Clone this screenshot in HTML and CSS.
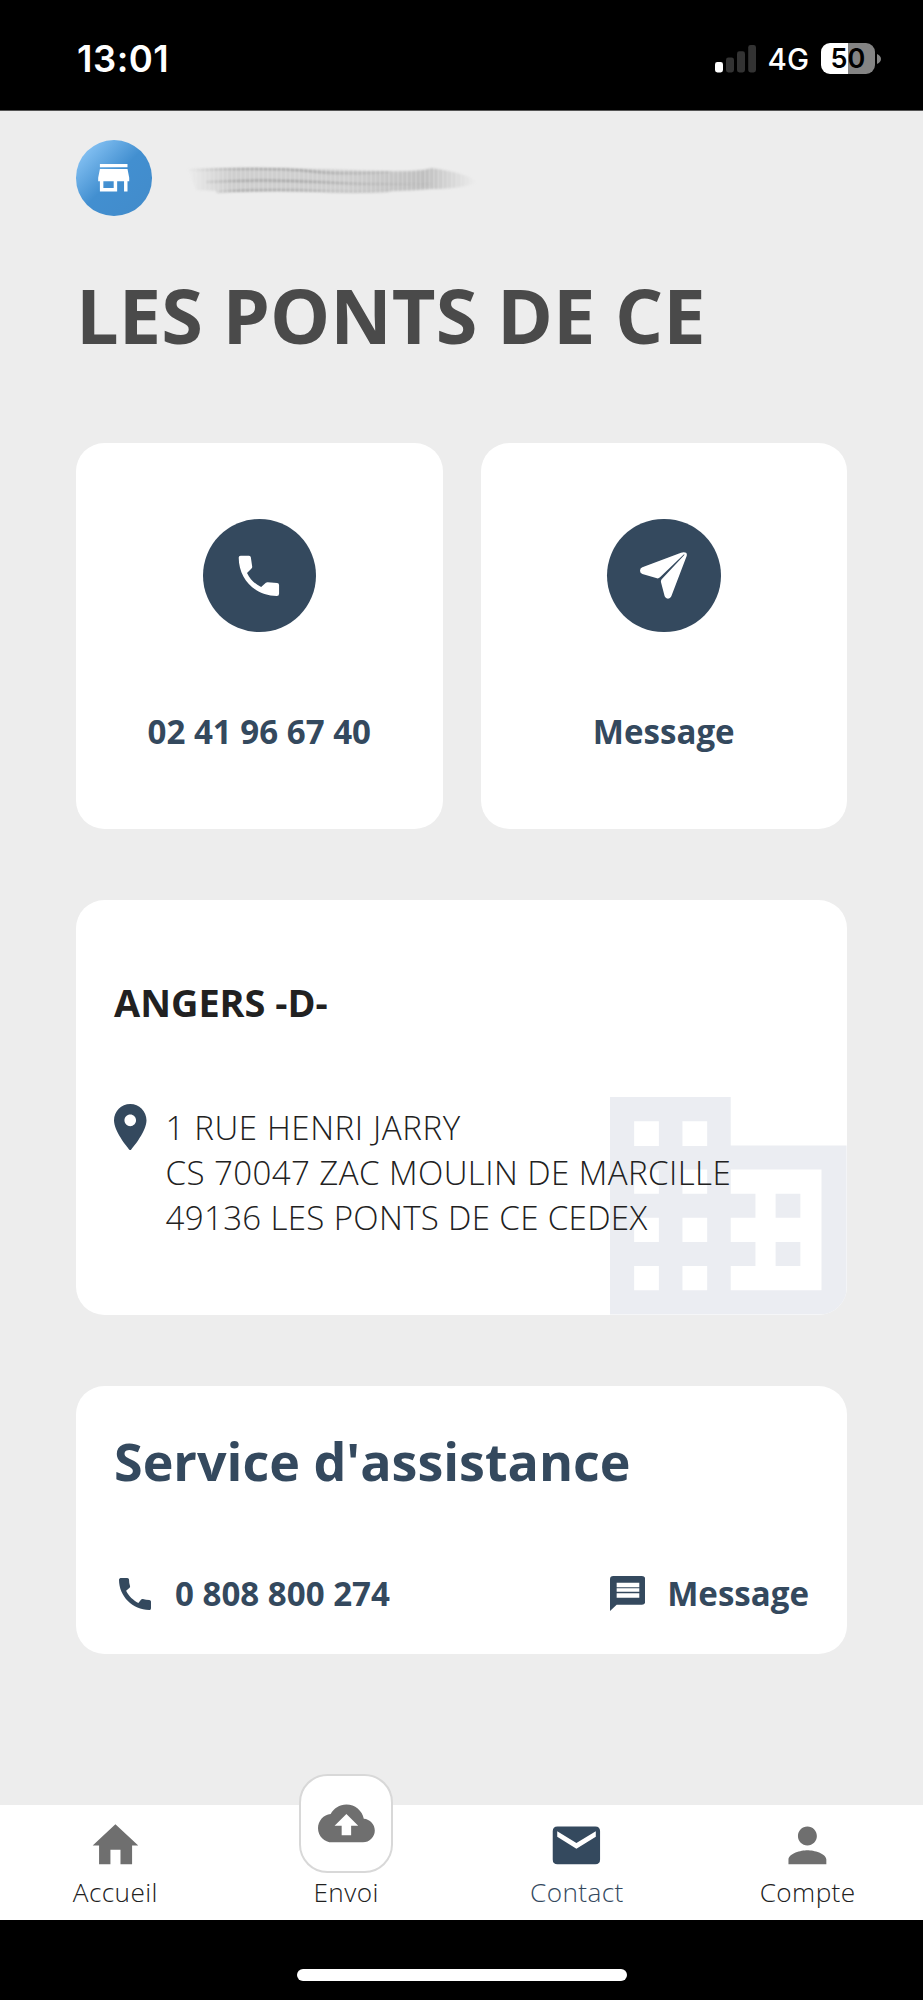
FILE: index.html
```html
<!DOCTYPE html>
<html lang="fr">
<head>
<meta charset="utf-8">
<title>Contact</title>
<link rel="stylesheet" href="styles.css">
</head>
<body>
<header class="status">
  <span class="clock">13:01</span>
  <div class="status-right">
    <svg class="signal" viewBox="0 0 41 28" width="41" height="28"><rect x="0" y="17" width="8" height="10.5" rx="2.4" fill="#fff"/><g fill="#333"><rect x="11" y="12.5" width="8" height="15" rx="2.4"/><rect x="22" y="6.3" width="8" height="21.2" rx="2.4"/><rect x="33.2" y="0" width="7.8" height="27.5" rx="2.4"/></g></svg>
    <span class="network">4G</span>
    <div class="battery"><span class="level">50</span></div>
    <svg class="nub" viewBox="0 0 4 10" width="4" height="10"><path d="M0 0Q4 1.8 4 5T0 10z" fill="#848484"/></svg>
  </div>
</header>
<main class="content">
  <div class="agency">
    <div class="avatar"><svg viewBox="0 0 24 24" width="41.4" height="41.4"><path fill="#fff" d="M20 4H4v2h16V4zm1 10v-2l-1-5H4l-1 5v2h1v6h10v-6h4v6h2v-6h1zm-9 4H6v-4h6v4z"/></svg></div>
    <svg class="smudge" viewBox="0 0 288 32" width="294" height="32" preserveAspectRatio="none">
      <defs>
        <linearGradient id="fade" x1="0" x2="1"><stop offset="0" stop-color="#bbb" stop-opacity="0"/><stop offset=".16" stop-color="#c4c4c4" stop-opacity=".75"/><stop offset=".55" stop-color="#c4c4c4" stop-opacity=".75"/><stop offset=".82" stop-color="#b8b8b8" stop-opacity=".85"/><stop offset="1" stop-color="#bbb" stop-opacity="0"/></linearGradient>
        <linearGradient id="line" gradientUnits="userSpaceOnUse" x1="0" x2="280" y1="0" y2="0"><stop offset="0" stop-color="#888" stop-opacity="0"/><stop offset=".2" stop-color="#888" stop-opacity=".6"/><stop offset=".4" stop-color="#888" stop-opacity=".65"/><stop offset=".8" stop-color="#999" stop-opacity=".15"/><stop offset="1" stop-color="#999" stop-opacity="0"/></linearGradient>
        <pattern id="ribs" width="4.4" height="32" patternUnits="userSpaceOnUse"><rect width="1.8" height="32" fill="#ededed" opacity=".2"/></pattern>
        <filter id="soft" x="-5%" y="-20%" width="110%" height="140%"><feGaussianBlur stdDeviation="1"/></filter>
      </defs>
      <g filter="url(#soft)">
        <path fill="url(#fade)" d="M2 4Q90 2 160 5T240 3Q275 8 285 17Q272 24 240 24Q190 28 150 26T50 27L10 25z"/>
        <path fill="none" stroke="url(#line)" stroke-width="2" d="M2 5Q90 2 120 6T200 7M20 17Q80 14 130 17T240 19M30 27Q80 24 130 26T200 26"/>
      </g>
      <path fill="url(#ribs)" d="M6 2h274v26H6z"/>
    </svg>
  </div>
  <h1 class="title">LES PONTS DE CE</h1>
  <div class="actions">
    <div class="card action">
      <div class="disc"><svg viewBox="0 0 24 24" width="53.8" height="53.8"><path fill="#fff" d="M3.9 3h3.7q.7 0 .8.7l.6 4.1q.1.5-.3.9l-2 2c1.4 2.9 3.5 4.9 6.3 6.3l2.1-1.9q.4-.4.9-.3l4.1.4q.9.1.9.9v3.9q0 1-1 1C10.5 21 3 13.5 3 3.9 3 3.3 3.3 3 3.9 3z"/></svg></div>
      <span>02 41 96 67 40</span>
    </div>
    <div class="card action">
      <div class="disc"><svg viewBox="540 367 141 140" width="47" height="46.7"><path fill="#fff" fill-rule="evenodd" d="M671 368q-4 0-8 1.500L547 413q-7 3-7 10t7 10l44 13q5 1 9-3L672 374q2 0 1 2L605 449q-3 4-2 9l11 42q3 7 10 7t10-7L680 379q3-11-9-11z"/></svg></div>
      <span>Message</span>
    </div>
  </div>
  <section class="card address">
    <svg class="building" viewBox="0 0 19.6 18" width="236.6" height="217.5"><path fill="#ebedf2" fill-rule="evenodd" d="M0 0h10v4h9.6v14H0zM2 2v2.05h2.05V2zM6 2v2.05h2.05V2zM2 6v2h2.05V6zM6 6v2h2.05V6zM2 10v2h2.05v-2zM6 10v2h2.05v-2zM2 14v2h2.05v-2zM6 14v2h2.05v-2zM10 6v2h2.05v2H10v2h2.05v2H10v2h7.52V6zM13.72 8h2.05v2h-2.05zM13.72 12h2.05v2h-2.05z"/></svg>
    <h2 class="place">ANGERS -D-</h2>
    <div class="where">
      <svg class="pin" viewBox="5 2 14 20" width="32.5" height="46.7" preserveAspectRatio="none"><path fill="#34495e" d="M12 2C8.13 2 5 5.13 5 9c0 5.25 7 13 7 13s7-7.75 7-13c0-3.87-3.13-7-7-7zm0 9.5c-1.38 0-2.5-1.12-2.5-2.5s1.12-2.5 2.5-2.5 2.5 1.12 2.5 2.5-1.12 2.5-2.5 2.5z"/></svg>
      <p class="lines"><span class="street">1 RUE HENRI JARRY</span><br>CS 70047 ZAC MOULIN DE MARCILLE<br><span class="city">49136 LES PONTS DE CE CEDEX</span></p>
    </div>
  </section>
  <section class="card support">
    <h2 class="support-title">Service d'assistance</h2>
    <div class="support-row">
      <div class="link call"><svg viewBox="3 3 18 18" width="32" height="32"><path fill="#34495e" d="M20.01 15.38c-1.23 0-2.42-.2-3.53-.56-.35-.12-.74-.03-1.01.24l-1.57 1.97c-2.83-1.35-5.48-3.9-6.89-6.83l1.95-1.66c.27-.28.35-.67.24-1.02-.37-1.11-.56-2.3-.56-3.53 0-.54-.45-.99-.99-.99H4.19C3.65 3 3 3.24 3 3.99 3 13.28 10.73 21 20.01 21c.71 0 .99-.63.99-1.18v-3.45c0-.54-.45-.99-.99-.99z"/></svg><span>0 808 800 274</span></div>
      <div class="link write"><svg viewBox="448 618 106 105" width="35.3" height="35"><path fill="#34495e" fill-rule="evenodd" d="M458 618h86q10 0 10 10v66q0 10-10 10h-76l-20 19V628q0-10 10-10zM468 638v13.500h68V638zM468 655v10.500h68V655zM468 670v13.500h68V670z"/></svg><span>Message</span></div>
    </div>
  </section>
</main>
<nav class="tabs">
  <a class="tab"><svg viewBox="0 0 24 24" width="56.8" height="56.8"><path fill="#6f6f6f" d="M9.9 20v-6.2h4.25V20h4.9v-8h2.6L12 3.1 2.4 12h2.7v8z"/></svg><span>Accueil</span></a>
  <a class="tab"><div class="upload"><svg viewBox="0 0 24 24" width="56.8" height="56.8"><path fill="#6f6f6f" d="M19.35 10.04C18.67 6.59 15.64 4 12 4 9.11 4 6.6 5.64 5.35 8.04 2.34 8.36 0 10.91 0 14c0 3.31 2.69 6 6 6h13c2.76 0 5-2.24 5-5 0-2.64-2.05-4.78-4.65-4.96zM14 13v4h-4v-4H7l5-5 5 5h-3z"/></svg></div><span>Envoi</span></a>
  <a class="tab active"><svg viewBox="0 0 24 24" width="56.8" height="56.8"><path fill="#34495e" fill-rule="evenodd" d="M4 4h16q2 0 2 2v12q0 2-2 2H4q-2 0-2-2V6q0-2 2-2zM3.9 6v2.3L12 13.4l8.2-5.1V6L12 11z"/></svg><span>Contact</span></a>
  <a class="tab"><svg viewBox="0 0 24 24" width="56.8" height="56.8"><path fill="#6f6f6f" d="M12 12c2.21 0 4-1.79 4-4s-1.79-4-4-4-4 1.79-4 4 1.79 4 4 4zm0 2c-2.67 0-8 1.34-8 4v2h16v-2c0-2.66-5.33-4-8-4z"/></svg><span>Compte</span></a>
</nav>
<footer class="home-area"><div class="home-bar"></div></footer>
</body>
</html>
```
FILE: styles.css
```css
* { box-sizing: border-box; margin: 0; padding: 0; }
body { width: 923px; height: 2000px; display: flex; flex-direction: column; overflow: hidden; background: #ededed; font-family: "Open Sans", "Noto Sans", sans-serif; color: #212121; }
svg { display: block; flex: none; }
span { white-space: nowrap; }

.status { height: 111px; flex: none; background: #000; color: #fff; display: flex; justify-content: space-between; align-items: center; padding: 7px 42px 0 77px; font-family: Inter, sans-serif; border-bottom: 1px solid #555; }
.clock { font-size: 36.5px; font-weight: 600; letter-spacing: 0.5px; }
.status-right { display: flex; align-items: center; }
.network { font-size: 29.5px; font-weight: 500; margin: 0 12px; }
.battery { width: 54px; height: 31px; border-radius: 9px; background: linear-gradient(90deg, #fff 50%, #848484 50%); color: #000; display: flex; align-items: center; justify-content: center; }
.level { font-size: 27px; font-weight: 600; line-height: 31px; }
.nub { margin-left: 2px; }

.content { height: 1694px; flex: none; padding: 29px 76px 0; }
.agency { display: flex; align-items: center; height: 75.7px; }
.avatar { width: 75.7px; height: 75.7px; border-radius: 50%; background: linear-gradient(135deg, #90caf9 5%, #428fd0 50%, #428bca 100%); display: flex; align-items: center; justify-content: center; }
.smudge { margin: 6px 0 0 34px; }
.title { margin-top: 54.3px; font-size: 75.7px; line-height: 90px; font-weight: 700; color: #4a4a4a; }

.card { background: #fff; border-radius: 28.4px; }
.actions { margin-top: 83px; display: grid; grid-template-columns: 1fr 1fr; gap: 38px; }
.action { height: 386px; padding-top: 76px; display: flex; flex-direction: column; align-items: center; gap: 77px; font-size: 33.1px; line-height: 45px; font-weight: 700; color: #34495e; }
.disc { width: 113.5px; height: 113.5px; border-radius: 50%; background: #34495e; display: flex; align-items: center; justify-content: center; }

.address { position: relative; overflow: hidden; margin-top: 71.3px; height: 414.7px; padding: 75.3px 38px 0; }
.building { position: absolute; right: 0; bottom: 0; }
.place { position: relative; font-size: 37.9px; line-height: 52px; font-weight: 700; }
.where { position: relative; display: flex; align-items: flex-start; gap: 19px; margin-top: 76.2px; }
.lines { padding-top: 1px; font-size: 33.1px; line-height: 45.2px; font-weight: 300; letter-spacing: 0.41px; }
.street { letter-spacing: 0.6px; }
.city { letter-spacing: 0.33px; }

.support { margin-top: 71px; height: 268px; padding: 40px 38px 0; color: #34495e; }
.support-title { font-size: 52px; line-height: 70px; font-weight: 700; }
.support-row { margin-top: 75.5px; display: flex; justify-content: space-between; font-size: 33.1px; line-height: 45px; font-weight: 700; }
.link { display: flex; align-items: center; gap: 24px; }
.call { padding-left: 5px; }
.write { gap: 22px; }

.tabs { height: 114.5px; flex: none; background: #fff; display: grid; grid-template-columns: repeat(4, 1fr); grid-template-rows: 100%; }
.tab { display: flex; flex-direction: column; align-items: center; justify-content: flex-end; padding-bottom: 8.5px; font-size: 26.2px; line-height: 38px; font-weight: 300; letter-spacing: 0.4px; }
.tab > svg { margin-bottom: -1px; }
.active { color: #34495e; }
.upload { width: 94px; height: 99.5px; flex: none; border: 2.4px solid #d8d8d8; border-radius: 28.4px; background: #fff; display: flex; align-items: center; justify-content: center; }

.home-area { flex: 1; background: #000; display: flex; justify-content: center; padding-top: 49px; }
.home-bar { width: 330px; height: 12.5px; border-radius: 7px; background: #fff; }
```
